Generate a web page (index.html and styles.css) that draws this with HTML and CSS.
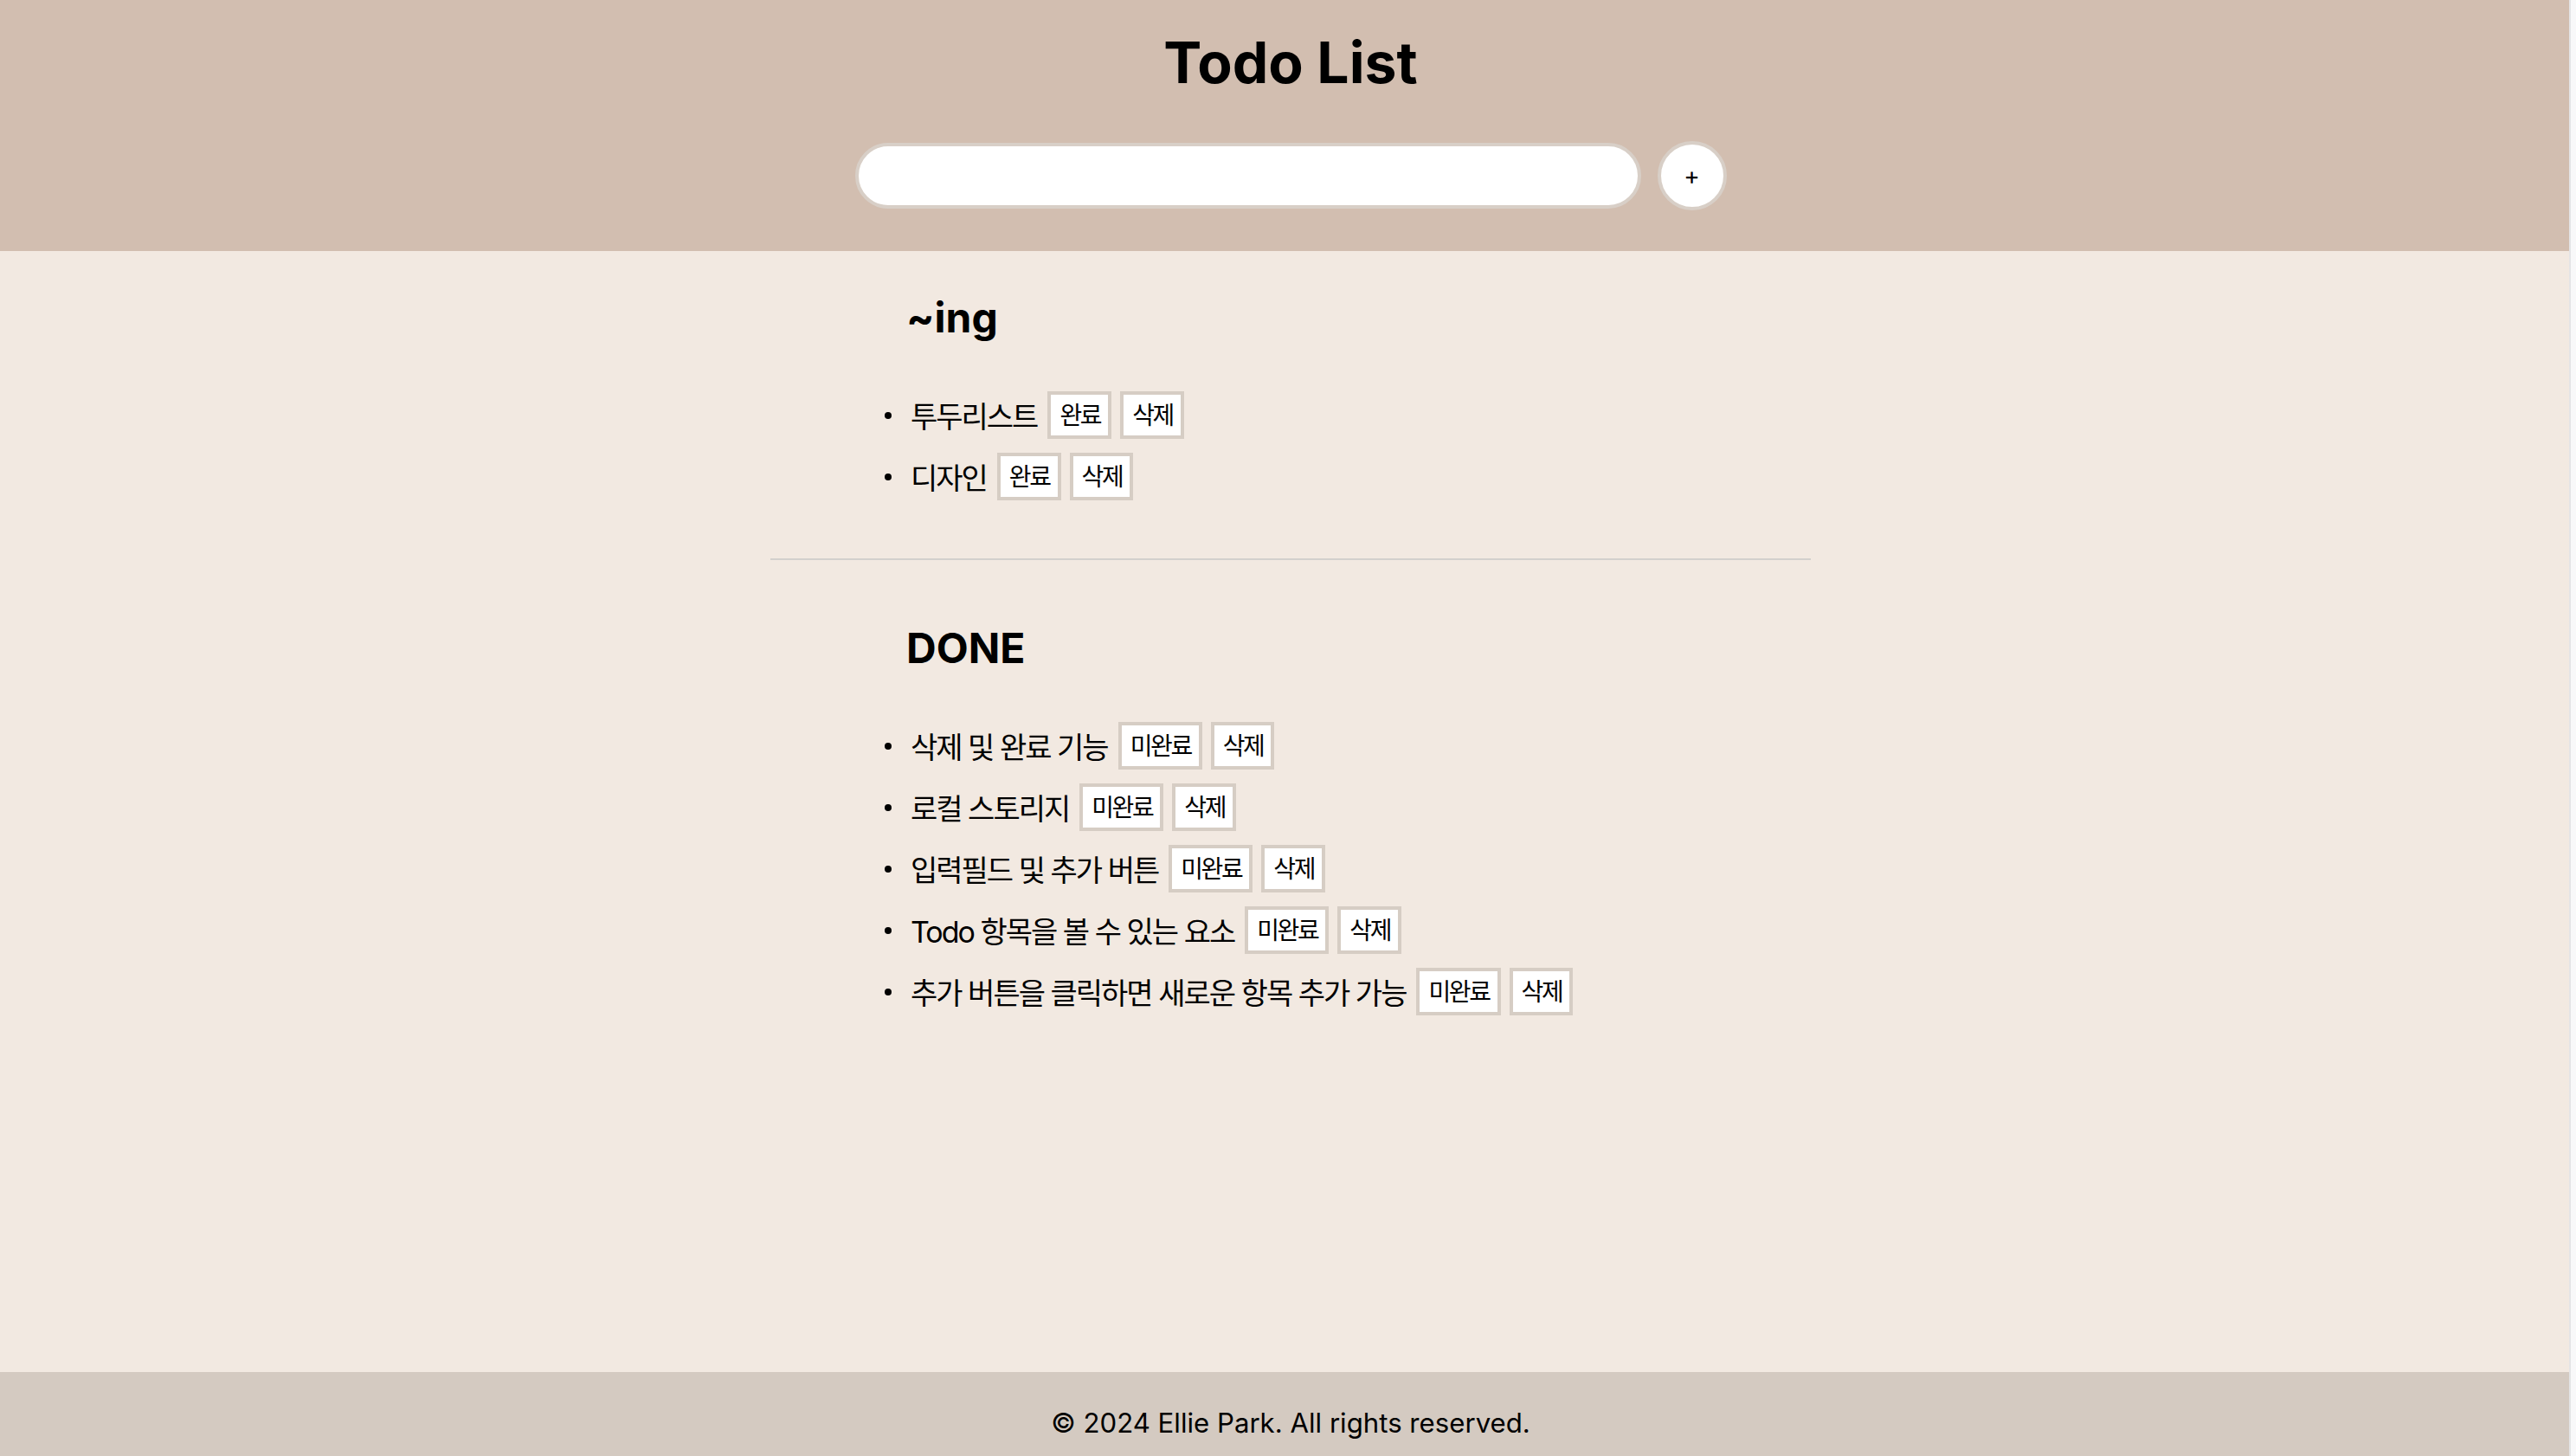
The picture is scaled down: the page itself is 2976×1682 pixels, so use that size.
FILE: index.html
```html
<!DOCTYPE html>
<html lang="ko">
<head>
<meta charset="utf-8">
<title>Todo List</title>
<link rel="stylesheet" href="styles.css">
</head>
<body>
<div class="page">
  <header class="header">
    <h1 class="title">Todo List</h1>
    <form class="add-form">
      <input class="add-input" type="text" aria-label="할 일">
      <button class="add-btn" type="button">+</button>
    </form>
  </header>

  <main class="main">
    <div class="board">
      <section class="group">
        <h2 class="group-title">~ing</h2>
        <ul class="todo-list">
          <li class="todo"><span class="todo-text">투두리스트</span><button class="todo-btn" type="button">완료</button><button class="todo-btn" type="button">삭제</button></li>
          <li class="todo"><span class="todo-text">디자인</span><button class="todo-btn" type="button">완료</button><button class="todo-btn" type="button">삭제</button></li>
        </ul>
      </section>

      <hr class="divider">

      <section class="group">
        <h2 class="group-title">DONE</h2>
        <ul class="todo-list">
          <li class="todo"><span class="todo-text">삭제 및 완료 기능</span><button class="todo-btn" type="button">미완료</button><button class="todo-btn" type="button">삭제</button></li>
          <li class="todo"><span class="todo-text">로컬 스토리지</span><button class="todo-btn" type="button">미완료</button><button class="todo-btn" type="button">삭제</button></li>
          <li class="todo"><span class="todo-text">입력필드 및 추가 버튼</span><button class="todo-btn" type="button">미완료</button><button class="todo-btn" type="button">삭제</button></li>
          <li class="todo"><span class="todo-text">Todo 항목을 볼 수 있는 요소</span><button class="todo-btn" type="button">미완료</button><button class="todo-btn" type="button">삭제</button></li>
          <li class="todo"><span class="todo-text">추가 버튼을 클릭하면 새로운 항목 추가 가능</span><button class="todo-btn" type="button">미완료</button><button class="todo-btn" type="button">삭제</button></li>
        </ul>
      </section>
    </div>
  </main>

  <footer class="footer">
    <p class="copyright">© 2024 Ellie Park. All rights reserved.</p>
  </footer>
</div>
<div class="scroll-strip"></div>
</body>
</html>
```

FILE: styles.css
```css
* {
  box-sizing: border-box;
}

html,
body {
  margin: 0;
  height: 100%;
}

body {
  font-family: Inter, "Noto Sans CJK KR", sans-serif;
  color: #000;
  background: #f2e9e1;
  overflow: hidden;
}

.page {
  min-height: 100vh;
  display: flex;
  flex-direction: column;
}

/* Header */
.header {
  background: #d2beb0;
  padding: 32px 0 47px 6px;
  display: flex;
  flex-direction: column;
  align-items: center;
}

.title {
  margin: 0;
  font-size: 66px;
  font-weight: 700;
  line-height: 80px;
}

.add-form {
  margin: 51px 0 0;
  display: flex;
  align-items: center;
  gap: 19px;
}

.add-input {
  width: 908px;
  height: 76px;
  border: 4px solid #d8cfc7;
  border-radius: 38px;
  background: #fff;
  outline: none;
  padding: 0 30px;
  font: inherit;
}

.add-btn {
  width: 80px;
  height: 80px;
  padding: 0;
  border: 4px solid #d8cfc7;
  border-radius: 50%;
  background: #fff;
  color: #000;
  font-family: Inter, sans-serif;
  font-size: 28px;
  line-height: 1;
  display: flex;
  align-items: center;
  justify-content: center;
}

/* Main */
.main {
  flex: 1;
  padding-left: 6px;
}

.board {
  width: 1202px;
  margin: 0 auto;
  padding-top: 48px;
}

.group {
  padding-left: 132px;
}

.group-title {
  margin: 0 0 56px 25px;
  font-size: 48px;
  font-weight: 700;
  line-height: 58px;
}

.todo-list {
  margin: 0;
  padding: 0;
  list-style: none;
  display: flex;
  flex-direction: column;
  gap: 16px;
}

.todo {
  display: flex;
  align-items: center;
  height: 55px;
}

.todo::before {
  content: "";
  width: 8px;
  height: 8px;
  border-radius: 50%;
  background: #000;
  margin-right: 22px;
  flex-shrink: 0;
}

.todo-text {
  font-size: 34px;
  letter-spacing: -2px;
  margin-right: 12px;
  white-space: nowrap;
}

.todo-btn {
  height: 55px;
  padding: 0 9px 0 10px;
  margin-right: 10px;
  border: 4px solid #d6cdc4;
  background: #fff;
  color: #000;
  font-family: Inter, "Noto Sans CJK KR", sans-serif;
  font-size: 28px;
  letter-spacing: -2.4px;
  line-height: 1;
}

.divider {
  margin: 67px 0 73px;
  border: 0;
  border-top: 2px solid #d3d0cd;
  height: 0;
}

/* Footer */
.footer {
  height: 97px;
  background: #d4cac1;
  padding: 39px 0 0 6px;
  text-align: center;
}

.copyright {
  margin: 0;
  font-size: 31.2px;
  line-height: 40px;
}

/* Right window edge strip */
.scroll-strip {
  position: fixed;
  top: 0;
  right: 0;
  width: 8px;
  height: 100%;
  background: #f8f8f9;
  border-left: 2px solid #e4e4e6;
}
```
